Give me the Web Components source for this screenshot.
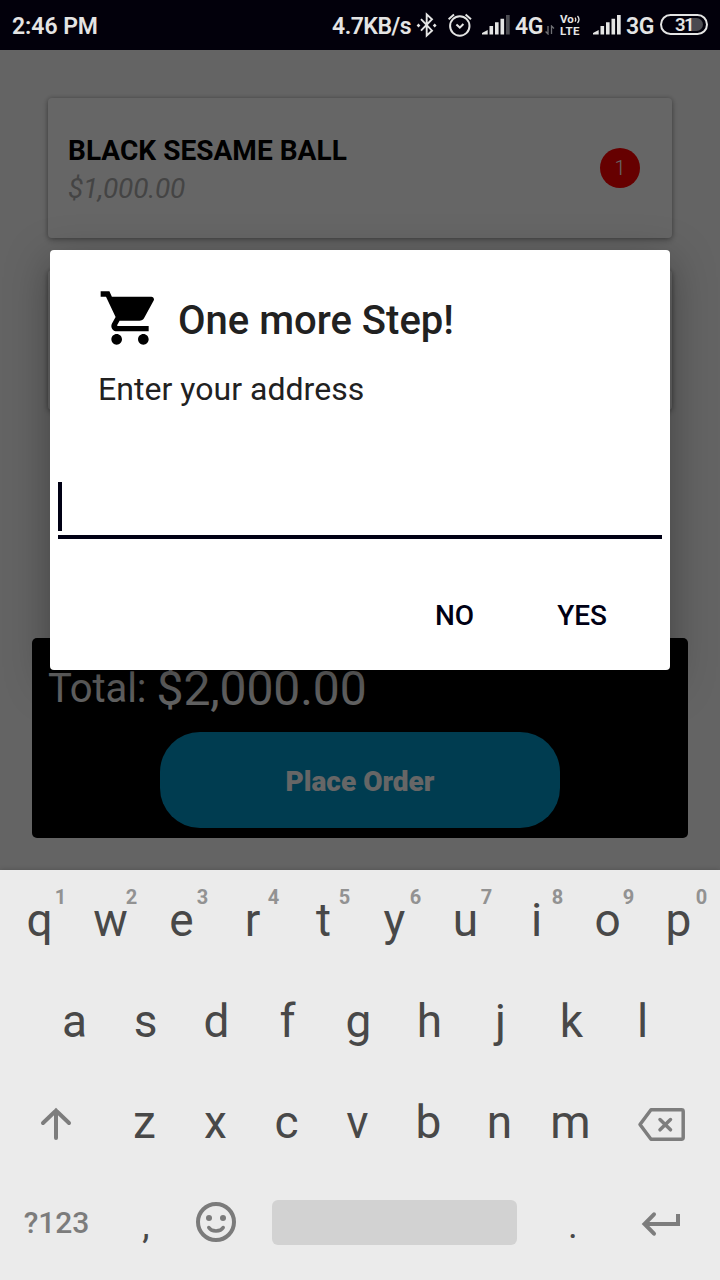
<!DOCTYPE html>
<html lang="en">
<head>
<meta charset="utf-8">
<title>Place Order</title>
<style>
html,body{margin:0;padding:0;width:720px;height:1280px;overflow:hidden;font-family:Roboto,"Liberation Sans",sans-serif;}
</style>
</head>
<body>
<phone-screen>
  <status-bar slot="status"></status-bar>
  <cart-item name="BLACK SESAME BALL" price="$1,000.00" count="1"></cart-item>
  <cart-item></cart-item>
  <order-total slot="footer" amount="$2,000.00">Place Order</order-total>
  <alert-dialog slot="dialog" heading="One more Step!">Enter your address</alert-dialog>
  <soft-keyboard slot="keyboard"></soft-keyboard>
</phone-screen>
<script>
const define = (name, render) => customElements.define(name, class extends HTMLElement {
  connectedCallback() {
    if (this.shadowRoot) return;
    this.attachShadow({mode: 'open'}).innerHTML = render(this);
  }
});

define('phone-screen', () => `
<style>
:host{display:grid;grid-template-rows:50px 820px 410px;width:720px;height:1280px;overflow:hidden}
main{position:relative;background:#fafafa;overflow:hidden;display:flex;flex-direction:column;justify-content:space-between}
.list{padding:48px 48px 0;display:grid;gap:32px}
.foot{padding:0 32px 32px}
.scrim{position:absolute;inset:0;background:rgba(0,0,0,.6);display:flex;align-items:center;justify-content:center}
</style>
<slot name="status"></slot>
<main>
  <div class="list"><slot></slot></div>
  <div class="foot"><slot name="footer"></slot></div>
  <div class="scrim"><slot name="dialog"></slot></div>
</main>
<slot name="keyboard"></slot>`);

define('signal-bars', el => `
<style>:host{display:block;width:28px;height:22px}svg{display:block}</style>
<svg width="28" height="22" viewBox="0 0 28 22" fill="#e4e4e4">
<path d="M0 20.5V19L5.7 16V20.5ZM7.5 12h3.6v8.5H7.5ZM13 8.2h3.6v12.3H13ZM18.5 4.8h3.6v15.7h-3.6Z"/>
<path d="M24 1h3.7v19.5H24Z" ${el.hasAttribute('weak') ? 'fill="#4c4c52"' : ''}/></svg>`);

define('status-bar', () => `
<style>
:host{display:flex;align-items:center;box-sizing:border-box;height:50px;padding:0 12px;background:#02000b;color:#e4e4e4;font-size:23px;font-weight:600;line-height:52px;white-space:nowrap}
.time{flex:1;letter-spacing:-.05px}
.time,.t{line-height:50px;padding-top:3px}
span,svg,signal-bars{flex:none}
svg{display:block}
.volte{width:22px;margin:0 11px 0 5px;display:grid;grid-template-rows:12px 12px;font-size:11.5px;line-height:12px;font-weight:700}
.volte div{display:flex;align-items:center}
.volte .lte{letter-spacing:.5px}
.bat{position:relative;box-sizing:border-box;width:48px;height:21px;margin:-1px 0 0 6px;border:2px solid #e4e4e4;border-radius:11px;font-size:18.5px;line-height:18px}
.bat i{position:absolute;right:3px;top:2px;width:14px;height:13px;background:#4a4a50;border-radius:0 7px 7px 0}
.bat b{position:absolute;left:13px;top:0;font-weight:600;letter-spacing:-1.5px}
</style>
<span class="time">2:46 PM</span>
<span class="t" style="width:79px;letter-spacing:-.5px">4.7KB/s</span>
<svg style="margin:0 10px 0 5px" width="22" height="26" viewBox="416 12 22 26"><path d="M421 19.2 432 30.7 426.7 35.5V14.3L432 19.2 421 30.7" fill="none" stroke="#e4e4e4" stroke-width="1.9"/><path d="m418.5 23.6 1.9 1.9-1.9 1.9-1.9-1.9ZM434.7 23.6l1.9 1.9-1.9 1.9-1.9-1.9Z" fill="#e4e4e4"/></svg>
<svg style="margin-right:10px" width="24" height="26" viewBox="448 12 24 26" fill="none" stroke="#e4e4e4" stroke-width="2"><circle cx="459.8" cy="26" r="9.7"/><path d="M448.6 19.2 454 14.6M465.6 14.6 471 19.2M456.4 24.6 459.8 27.6 463.4 24"/></svg>
<signal-bars weak></signal-bars>
<span class="t" style="width:29px;margin-left:5px;letter-spacing:-.3px">4G</span>
<svg width="10" height="10" viewBox="0 0 10 10" style="margin:10px 0 0 1px" fill="none" stroke="#707075" stroke-width="1.3"><path d="M3 1v8L.6 6.5M6.5 9V1L9 3.5"/></svg>
<span class="volte"><div>Vo<svg width="7" height="9" viewBox="0 0 7 9" fill="none" stroke="#e4e4e4" stroke-width="1.3"><path d="M1 2.6Q2.6 4.5 1 6.6M3.5 1Q6.5 4.5 3.5 8"/></svg></div><div class="lte">LTE</div></span>
<signal-bars></signal-bars>
<span class="t" style="width:28px;margin-left:5px;letter-spacing:-.3px">3G</span>
<span class="bat"><i></i><b>31</b></span>`);

define('cart-item', el => `
<style>
:host{display:flex;box-sizing:border-box;height:140px;padding:0 32px 0 20px;align-items:center;justify-content:space-between;background:#fff;border-radius:4px;box-shadow:0 2px 6px rgba(0,0,0,.28),0 0 4px rgba(0,0,0,.2)}
.info{padding-top:4px}
h3{margin:0;font-size:28px;line-height:36px;font-weight:700;color:#000;letter-spacing:.04px}
p{margin:2px 0 0;font-size:28px;line-height:36px;font-style:italic;color:#aaa;letter-spacing:-.25px}
.n{width:40px;height:40px;border-radius:50%;background:#f00;color:#fff;font-size:20px;font-weight:300;line-height:40px;text-align:center}
</style>
${el.getAttribute('name') ? `<div class="info"><h3>${el.getAttribute('name')}</h3><p>${el.getAttribute('price')}</p></div><div class="n">${el.getAttribute('count')}</div>` : ''}`);

define('order-total', el => `
<style>
:host{display:block;box-sizing:border-box;height:200px;padding:20px 16px 10px;background:#000;border-radius:5px;color:#fff}
.row{display:flex;align-items:flex-start;height:74px}
.l{font-size:40px;line-height:62px;width:108.5px;letter-spacing:-.1px}
.a{font-size:48px;line-height:61px;letter-spacing:-.1px}
.btn{width:400px;height:96px;margin:0 auto;border-radius:40px;background:#0096c8;font-size:28px;font-weight:900;line-height:99px;text-align:center}
</style>
<div class="row"><span class="l">Total:</span><span class="a">${el.getAttribute('amount')}</span></div>
<div class="btn"><slot></slot></div>`);

define('alert-dialog', el => `
<style>
:host{display:flex;flex-direction:column;box-sizing:border-box;width:620px;height:420px;background:#fff;border-radius:4px;box-shadow:0 12px 44px rgba(0,0,0,.34)}
header{display:flex;align-items:center;gap:16px;height:64px;padding:36px 48px 0;color:#212121;font-size:40px;font-weight:500;line-height:64px}
header span{padding-top:6px}
header svg{color:#000;fill:#000}
p{margin:16px 48px 0;font-size:32px;line-height:46px;color:#212121;letter-spacing:.03px}
.field{box-sizing:border-box;height:57px;margin:70px 8px 0;border-bottom:4px solid #000014}
.field i{display:block;width:4px;height:49px;background:#000014}
nav{display:flex;justify-content:flex-end;gap:83px;margin-top:49px;padding-right:63px;font-size:28px;font-weight:500;line-height:56px;color:#000014}
</style>
<header><svg width="64" height="64" viewBox="0 0 24 24"><path d="M7 18c-1.1 0-1.99.9-1.99 2S5.900 22 7 22s2-.9 2-2-.9-2-2-2zM1 2v2h2l3.600 7.590-1.350 2.450c-.16.28-.25.61-.25.96 0 1.100.9 2 2 2h12v-2H7.420c-.14 0-.25-.11-.25-.25l.03-.12.900-1.630h7.450c.75 0 1.410-.41 1.750-1.030l3.580-6.490c.08-.14.12-.31.12-.48 0-.55-.45-1-1-1H5.210l-.94-2H1zm16 16c-1.100 0-1.990.9-1.990 2s.89 2 1.990 2 2-.9 2-2-.9-2-2-2z"/></svg><span>${el.getAttribute('heading')}</span></header>
<p><slot></slot></p>
<div class="field"><i></i></div>
<nav><span>NO</span><span>YES</span></nav>`);

define('key-cap', el => `
<style>
:host{display:block;position:relative;width:71px;height:101px;font-size:46px;line-height:101px;text-align:center;color:#484848}
sup{position:absolute;left:41.5px;top:16px;width:30px;font-size:20px;line-height:22px;font-weight:700;color:#929292}
:host([hint="0"]) sup{left:43.5px}
</style><slot></slot>${el.hasAttribute('hint') ? `<sup>${el.getAttribute('hint')}</sup>` : ''}`);

const keys = (letters, hints = '') => [...letters].map((c, i) =>
  `<key-cap${hints ? ` hint="${hints[i]}"` : ''}>${c}</key-cap>`).join('');

define('soft-keyboard', () => `
<style>
:host{display:flex;flex-direction:column;position:relative;height:410px;background:#ebebeb;box-shadow:0 0 5px rgba(0,0,0,.2)}
.row{display:flex;height:101px;align-items:center}
.row:last-child{margin-top:-1px}
.icon{display:flex;justify-content:center;flex:none}
svg{display:block}
.mode{width:113px;font-size:30px;font-weight:500;color:#7c7c7c;text-align:center}
.p{font-size:37px;line-height:108px}
.space{width:245px;height:45px;background:#d2d2d2;border-radius:6px}
</style>
<div class="row" style="padding-left:4px">${keys('qwertyuiop', '1234567890')}</div>
<div class="row" style="padding-left:39px">${keys('asdfghjkl')}</div>
<div class="row">
  <div class="icon" style="width:109px;margin-top:3px"><svg width="36" height="36" viewBox="37 1106 36 36" fill="none" stroke="#7d7d7d" stroke-width="4" stroke-linecap="round"><path d="M56 1138V1110.500M43 1123 56 1110.500 69 1123"/></svg></div>
  ${keys('zxcvbnm')}
  <div class="icon" style="width:112px;margin-top:3px"><svg width="50" height="36" viewBox="637 1106 50 36" fill="none" stroke="#7d7d7d" stroke-width="3.500" stroke-linejoin="round"><path d="M651 1109.800H681.500Q683.200 1109.800 683.200 1111.500V1137.500Q683.200 1139.200 681.500 1139.200H651L640 1124.500Z"/><path d="M660 1119.500 670.500 1129.800M670.500 1119.500 660 1129.800" stroke-linecap="round"/></svg></div>
</div>
<div class="row">
  <div class="mode">?123</div>
  <key-cap class="p" style="width:66px">,</key-cap>
  <div class="icon" style="width:74px;margin-top:-1px"><svg width="42" height="42" viewBox="-21 -21 42 42" fill="none" stroke="#7b7b7b" stroke-width="4"><circle r="18"/><path d="M-7.200 5.500C-4.500 10 4.500 10 7.200 5.500" stroke-width="3.500" stroke-linecap="round"/><g fill="#7b7b7b" stroke="none"><circle cx="-7" cy="-4" r="3"/><circle cx="7" cy="-4" r="3"/></g></svg></div>
  <div class="space" style="margin-left:19px"></div>
  <key-cap class="p" style="width:112px">.</key-cap>
  <div class="icon" style="width:65px;margin-top:3px"><svg width="42" height="28" viewBox="641 1210 42 28" fill="none" stroke="#7d7d7d" stroke-width="4"><path d="M678 1214V1224H645"/><path d="M654 1214.300 644.500 1224 654 1233.700" stroke-linecap="round"/></svg></div>
</div>`);
</script>
</body>
</html>
